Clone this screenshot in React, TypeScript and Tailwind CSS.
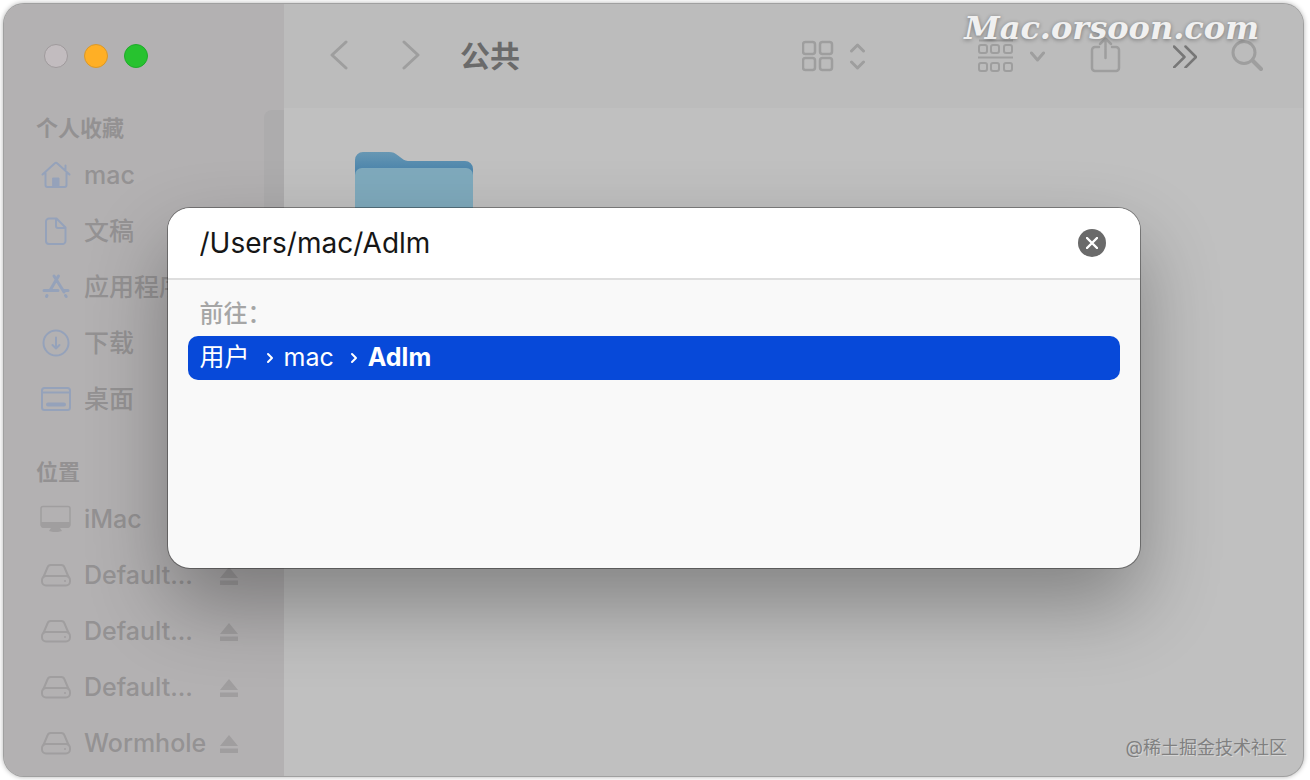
import { useState } from 'react';
import type { ReactNode } from 'react';

const HomeIcon = () => (
  <svg className="w-8 h-8" viewBox="0 0 32 32" fill="none" stroke="currentColor" strokeWidth="2" strokeLinecap="round" strokeLinejoin="round">
    <path d="M2.500 14.500 14.600 3.500a2 2 0 0 1 2.800 0l12.100 11M25.500 10V5.500M5.500 13v12a2 2 0 0 0 2 2h17a2 2 0 0 0 2-2V13" />
    <path d="M13 18h6v9h-6z" fill="currentColor" stroke="currentColor" strokeWidth="1" />
  </svg>
);

const DocIcon = () => (
  <svg className="w-8 h-8" viewBox="0 0 32 32" fill="none" stroke="currentColor" strokeWidth="2" strokeLinejoin="round">
    <path d="M9 2.500h7.500l9 9V25a3 3 0 0 1-3 3H9a3 3 0 0 1-3-3V5.500a3 3 0 0 1 3-3z" />
    <path d="M16 2.500V10a2 2 0 0 0 2 2h7.500" />
  </svg>
);

const AppsIcon = () => (
  <svg className="w-8 h-8" viewBox="0 0 32 32" fill="none" stroke="currentColor" strokeWidth="3" strokeLinecap="round">
    <path d="M14 4l10 16M18.500 4 10 18.500M4 18.500h14M24 18.500h4M7 23.500l-.5 1M25.500 23.500l.7 1" />
  </svg>
);

const DownloadIcon = () => (
  <svg className="w-8 h-8" viewBox="0 0 32 32" fill="none" stroke="currentColor" strokeWidth="2" strokeLinecap="round" strokeLinejoin="round">
    <circle cx="16" cy="15" r="12.500" />
    <path d="M16 9.500v11M12.500 17l3.500 3.500 3.500-3.500" />
  </svg>
);

const DesktopIcon = () => (
  <svg className="w-8 h-8" viewBox="0 0 32 32" fill="none" stroke="currentColor" strokeWidth="2" strokeLinejoin="round">
    <rect x="2" y="4" width="28" height="22" rx="2.500" />
    <path d="M2 8.500h28" />
    <path d="M8 20.500h16" strokeWidth="4" strokeLinecap="round" />
  </svg>
);

const ImacIcon = () => (
  <svg className="w-8 h-8" viewBox="0 0 32 32" fill="none" stroke="currentColor" strokeWidth="1.500" strokeLinejoin="round">
    <rect x="1" y="2.500" width="29" height="20" rx="2" />
    <path d="M1 18h29v4a2 2 0 0 1-2 2H3a2 2 0 0 1-2-2zM11 24h9l2 3-4 1h-5l-4-1z" fill="currentColor" stroke="none" />
  </svg>
);

const DiskIcon = () => (
  <svg className="w-8 h-8" viewBox="0 0 32 32" fill="none" stroke="currentColor" strokeWidth="2" strokeLinejoin="round">
    <path d="M3 18 7.500 7.500A3.500 3.500 0 0 1 11 5h10a3.500 3.500 0 0 1 3.500 2.500L29 18" />
    <rect x="2" y="16" width="28" height="9.500" rx="4" />
    <circle cx="25" cy="21" r="1" fill="currentColor" stroke="none" />
  </svg>
);

const EjectIcon = () => (
  <svg className="w-5 h-5" viewBox="0 0 20 20" fill="currentColor">
    <path d="M10 1 19 12H1zM1 14.500h18V19H1z" />
  </svg>
);

const FolderIcon = () => (
  <svg className="w-[120px] h-[100px]" viewBox="0 0 120 100">
    <defs>
      <linearGradient id="folderBack" x1="0" y1="0" x2="0" y2="1">
        <stop offset="0" stopColor="#6797b3" />
        <stop offset="0.18" stopColor="#4f87ad" />
      </linearGradient>
    </defs>
    <path d="M1 94V9a8 8 0 0 1 8-8h26c4 0 6 1 9 3.500l4 3C50 9.500 53 10 56 10h55a8 8 0 0 1 8 8v76z" fill="url(#folderBack)" />
    <path d="M1 94V24a7 7 0 0 1 7-7h104a7 7 0 0 1 7 7v70z" fill="#7faabd" />
  </svg>
);

interface Place {
  name: string;
  icon: () => ReactNode;
  eject?: boolean;
}

const favorites: Place[] = [
  { name: 'mac', icon: HomeIcon },
  { name: '文稿', icon: DocIcon },
  { name: '应用程序', icon: AppsIcon },
  { name: '下载', icon: DownloadIcon },
  { name: '桌面', icon: DesktopIcon },
];

const locations: Place[] = [
  { name: 'iMac', icon: ImacIcon },
  { name: 'Default...', icon: DiskIcon, eject: true },
  { name: 'Default...', icon: DiskIcon, eject: true },
  { name: 'Default...', icon: DiskIcon, eject: true },
  { name: 'Wormhole', icon: DiskIcon, eject: true },
];

function PlaceList({ title, places, iconColor }: { title: string; places: Place[]; iconColor: string }) {
  return (
    <section>
      <h2 className="h-10 pl-8 text-[22px] leading-10 font-bold text-[#939192]">{title}</h2>
      <ul>
        {places.map((place, index) => (
          <li key={index} className="flex items-center h-14 pl-9 pr-[45px]">
            <a href="#" className="flex flex-1 items-center gap-3 whitespace-nowrap">
              <span className={iconColor}>
                <place.icon />
              </span>
              {place.name}
            </a>
            {place.eject && (
              <button type="button" aria-label="推出" className="text-[#a09e9f]">
                <EjectIcon />
              </button>
            )}
          </li>
        ))}
      </ul>
    </section>
  );
}

function Sidebar() {
  return (
    <aside className="relative w-[280px] shrink-0 overflow-hidden bg-[#b3b1b2] text-[25px] font-medium text-[#949293]">
      <div className="flex items-center gap-4 h-[104px] pl-10">
        <button type="button" aria-label="关闭" className="w-6 h-6 rounded-full border border-[#9f9a9c] bg-[#c2bcbf]" />
        <button type="button" aria-label="最小化" className="w-6 h-6 rounded-full border border-[#d9982a] bg-[#ffaf25]" />
        <button type="button" aria-label="缩放" className="w-6 h-6 rounded-full border border-[#1fab2a] bg-[#27c22f]" />
      </div>
      <div className="flex flex-col gap-6">
        <PlaceList title="个人收藏" places={favorites} iconColor="text-[#95a2ba]" />
        <PlaceList title="位置" places={locations} iconColor="text-[#a09e9f]" />
      </div>
      <div className="absolute right-0 top-[106px] w-5 h-48 rounded-tl-lg bg-[#adacad]" />
    </aside>
  );
}

function Toolbar() {
  return (
    <header className="flex items-center h-[104px] pl-[45px] pr-10 bg-[#bcbcbc] text-[#9e9e9e]">
      <div className="flex items-center gap-[52px]">
        <button type="button" aria-label="后退">
          <svg className="w-5 h-8" viewBox="0 0 20 32" fill="none" stroke="currentColor" strokeWidth="3" strokeLinecap="round" strokeLinejoin="round">
            <path d="M17 2 3 15l14 13" />
          </svg>
        </button>
        <button type="button" aria-label="前进">
          <svg className="w-5 h-8" viewBox="0 0 20 32" fill="none" stroke="currentColor" strokeWidth="3" strokeLinecap="round" strokeLinejoin="round">
            <path d="m3 2 14 13L3 28" />
          </svg>
        </button>
      </div>
      <h1 className="pl-[39px] text-[30px] leading-8 font-bold text-[#6a6a6a]">公共</h1>
      <button type="button" aria-label="显示方式" className="flex items-center gap-4 ml-auto">
        <svg className="w-8 h-8" viewBox="0 0 32 32" fill="none" stroke="currentColor" strokeWidth="2.500">
          <rect x="1" y="2" width="12" height="12" rx="2.500" />
          <rect x="18" y="2" width="12" height="12" rx="2.500" />
          <rect x="1" y="18" width="12" height="12" rx="2.500" />
          <rect x="18" y="18" width="12" height="12" rx="2.500" />
        </svg>
        <svg className="w-4 h-8" viewBox="0 0 16 32" fill="none" stroke="currentColor" strokeWidth="3" strokeLinecap="round" strokeLinejoin="round">
          <path d="m1.500 11 6-6 6 6M1.500 22l6 6 6-6" />
        </svg>
      </button>
      <button type="button" aria-label="分组" className="flex items-center gap-4 ml-28">
        <svg className="w-9 h-9" viewBox="0 0 36 36" fill="none" stroke="currentColor" strokeWidth="2">
          <rect x="1" y="7" width="8" height="8" rx="2" />
          <rect x="13" y="7" width="8" height="8" rx="2" />
          <rect x="26" y="7" width="8" height="8" rx="2" />
          <path d="M1 2.500h34M0 19.500h35" />
          <rect x="1" y="25" width="8" height="8" rx="2" />
          <rect x="13" y="25" width="8" height="8" rx="2" />
          <rect x="26" y="25" width="8" height="8" rx="2" />
        </svg>
        <svg className="w-4 h-4" viewBox="0 0 16 16" fill="none" stroke="currentColor" strokeWidth="3" strokeLinecap="round" strokeLinejoin="round">
          <path d="m1.500 5 6 7 6-7" />
        </svg>
      </button>
      <button type="button" aria-label="共享" className="ml-11">
        <svg className="w-8 h-10" viewBox="0 0 32 40" fill="none" stroke="currentColor" strokeWidth="2.500" strokeLinecap="round" strokeLinejoin="round">
          <path d="M9 11H5a3 3 0 0 0-3 3v18a3 3 0 0 0 3 3h21a3 3 0 0 0 3-3V14a3 3 0 0 0-3-3h-4M15.500 22V3M10 8l5.500-5.500L21 8" />
        </svg>
      </button>
      <button type="button" aria-label="更多" className="ml-[51px] text-[#777]">
        <svg className="w-6 h-6" viewBox="0 0 24 24" fill="none" stroke="currentColor" strokeWidth="2.500" strokeLinecap="round" strokeLinejoin="round">
          <path d="m1 2.500 10.500 10.500L1 23.500M12.500 2.500 23 13 12.500 23.500" />
        </svg>
      </button>
      <button type="button" aria-label="搜索" className="ml-[34px]">
        <svg className="w-8 h-8" viewBox="0 0 32 32" fill="none" stroke="currentColor" strokeWidth="3" strokeLinecap="round">
          <circle cx="13" cy="12.500" r="11" />
          <path d="m21.500 20.500 8.500 8.500" strokeWidth="4" />
        </svg>
      </button>
    </header>
  );
}

const Crumb = () => (
  <svg className="w-2 h-3 ml-4 mr-[10px]" viewBox="0 0 8 12" fill="none" stroke="currentColor" strokeWidth="2" strokeLinecap="round" strokeLinejoin="round">
    <path d="m2 2 4 4-4 4" />
  </svg>
);

function GoToDialog() {
  const [path, setPath] = useState('/Users/mac/Adlm');

  return (
    <div
      role="dialog"
      className="flex flex-col w-full max-w-[972px] h-[360px] overflow-hidden rounded-[22px] bg-[#f9f9f9] shadow-[0_0_0_1px_rgba(0,0,0,0.35),0_36px_80px_rgba(0,0,0,0.32)]"
    >
      <div className="flex items-center h-[72px] px-8 border-b-2 border-[#dedede] bg-white">
        <input
          id="go-path"
          type="text"
          value={path}
          onChange={(e) => setPath(e.target.value)}
          className="flex-1 min-w-0 text-[28px] leading-9 text-[#161616] outline-none"
        />
        <button
          type="button"
          aria-label="清除"
          onClick={() => setPath('')}
          className="flex items-center justify-center w-7 h-7 mr-[2px] rounded-full bg-[#6a6a6a] text-white"
        >
          <svg className="w-3 h-3" viewBox="0 0 12 12" fill="none" stroke="currentColor" strokeWidth="2.400" strokeLinecap="round">
            <path d="m1 1 10 10M11 1 1 11" />
          </svg>
        </button>
      </div>
      <label htmlFor="go-path" className="px-8 pt-[18px] pb-[6px] text-2xl leading-8 font-medium text-[#a6a6a6]">
        前往：
      </label>
      <button type="button" className="flex items-center h-11 mx-5 px-3 rounded-[10px] bg-[#0749d9] text-[25px] text-white">
        用户
        <Crumb />
        mac
        <Crumb />
        <b>Adlm</b>
      </button>
    </div>
  );
}

export default function App() {
  return (
    <div className="h-screen min-h-[780px] p-1 pr-[7px] bg-white font-['Inter','Noto_Sans_CJK_SC',sans-serif]">
      <div className="relative flex h-full overflow-hidden rounded-[20px] bg-[#c0c0c0] shadow-[0_0_0_1px_#a0a0a0,0_0_5px_1px_rgba(0,0,0,0.3)]">
        <Sidebar />
        <main className="flex-1 min-w-0">
          <Toolbar />
          <div className="pt-[43px] pl-[70px]">
            <FolderIcon />
          </div>
        </main>

        <div className="absolute inset-0 flex items-start justify-center px-6 pt-[204px]">
          <GoToDialog />
        </div>

        {/* Watermarks */}
        <span className="absolute top-1 right-11 font-['DejaVu_Serif',serif] text-[32px] leading-10 font-bold italic text-[#f0f0f0] [text-shadow:0_1px_4px_rgba(0,0,0,0.4)]">
          Mac.orsoon.com
        </span>
        <span className="absolute right-4 bottom-4 text-lg leading-6 text-[#808080] [text-shadow:1px_1px_0_#d6d6d6]">
          @稀土掘金技术社区
        </span>
      </div>
    </div>
  );
}
